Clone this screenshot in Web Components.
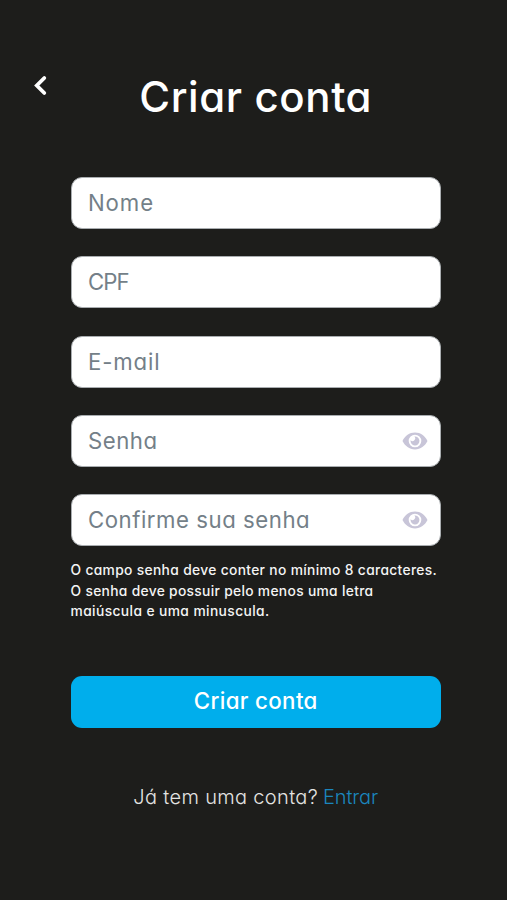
<!DOCTYPE html>
<html lang="pt-BR">
<head>
<meta charset="utf-8">
<title>Criar conta</title>
<style>
html, body { margin: 0; height: 100%; background: #1d1d1b; }
body { font-family: Inter, "Liberation Sans", sans-serif; font-feature-settings: "cv11"; overflow: hidden; }
</style>
</head>
<body>
<signup-page></signup-page>
<script>
function define(name, html, setup) {
  const template = document.createElement('template');
  template.innerHTML = html;
  customElements.define(name, class extends HTMLElement {
    connectedCallback() {
      if (this.shadowRoot) return;
      this.attachShadow({ mode: 'open' }).append(template.content.cloneNode(true));
      if (setup) setup(this);
    }
  });
}

define('back-button', `
<style>
:host { display: block; width: 14px; height: 22px; }
svg { display: block; }
</style>
<svg width="14" height="23" viewBox="0 0 14 23" fill="none" stroke="#fff" stroke-width="3.8" stroke-linecap="round" stroke-linejoin="miter"><path d="M11.300 4 3.800 11.500l7.500 7.500"/></svg>`);

define('eye-icon', `
<style>
:host { display: block; width: 26px; height: 18px; }
svg { display: block; }
</style>
<svg width="26" height="18" viewBox="0 0 26 18"><path fill="#c8c5d8" fill-rule="evenodd" d="M.5 9C3 4 7.400 .6 13 .6S23 4 25.500 9C23 14 18.600 17.400 13 17.400S3 14 .5 9ZM13 2.700a6.300 6.300 0 1 0 0 12.600a6.300 6.300 0 0 0 0-12.600Z"/><path fill="#c8c5d8" d="M12.400 4.600a4.450 4.450 0 1 1-3.800 3.700a1.900 1.900 0 0 0 3.800-3.700Z"/></svg>`);

define('text-field', `
<style>
:host { display: flex; align-items: center; justify-content: space-between; box-sizing: border-box; height: 52px; padding: 0 12px 0 16.500px; border: 1px solid #a9adb0; border-radius: 11px; background: #fff; color: #747f88; font-size: 22.2px; font-weight: 390; }
.label { white-space: nowrap; line-height: 49.500px; height: 50px; }
</style>
<span class="label"><slot></slot></span><slot name="icon"></slot>`, el => {
  el.shadowRoot.querySelector('.label').style.letterSpacing = el.getAttribute('tracking') + 'px';
});

define('password-hint', `
<style>
:host { display: block; margin-top: 14px; height: 62px; color: #f4f4f4; font-size: 13.8px; font-weight: 500; line-height: 20.5px; }
::slotted(div) { white-space: nowrap; }
</style>
<slot></slot>`);

define('primary-button', `
<style>
:host { display: block; height: 52px; border-radius: 11px; background: #00aeec; color: #fff; font-size: 22.3px; font-weight: 470; line-height: 50px; letter-spacing: .35px; text-align: center; }
</style>
<slot></slot>`);

define('login-prompt', `
<style>
:host { display: flex; justify-content: center; gap: 5px; color: #e4e4e2; font-size: 20px; font-weight: 300; line-height: 26px; letter-spacing: .33px; white-space: nowrap; }
a { color: #1b86be; letter-spacing: -.1px; }
</style>
<span><slot></slot></span><a><slot name="link"></slot></a>`);

define('signup-page', `
<style>
:host { display: block; box-sizing: border-box; height: 900px; padding: 74px 66px 0 33px; background: #1d1d1b; }
header { display: grid; grid-template-columns: 37.500px 1fr; align-items: start; height: 103px; }
h1 { margin: 0; text-align: center; color: #fff; font-size: 42px; font-weight: 550; line-height: 46px; letter-spacing: .6px; white-space: nowrap; }
main { margin-left: 37.500px; }
.fields { display: grid; gap: 27.250px; }
primary-button { margin-top: 54px; }
login-prompt { margin-top: 55.500px; }
</style>
<header><back-button></back-button><h1>Criar conta</h1></header>
<main>
<div class="fields">
<text-field tracking=".9">Nome</text-field>
<text-field tracking="-.9">CPF</text-field>
<text-field tracking=".85">E-mail</text-field>
<text-field tracking=".5">Senha<eye-icon slot="icon"></eye-icon></text-field>
<text-field tracking=".53">Confirme sua senha<eye-icon slot="icon"></eye-icon></text-field>
</div>
<password-hint>
<div style="letter-spacing:.34px">O campo senha deve conter no mínimo 8 caracteres.</div>
<div style="letter-spacing:.32px">O senha deve possuir pelo menos uma letra</div>
<div style="letter-spacing:.4px">maiúscula e uma minuscula.</div>
</password-hint>
<primary-button>Criar conta</primary-button>
<login-prompt>Já tem uma conta?<span slot="link">Entrar</span></login-prompt>
</main>`);
</script>
</body>
</html>
